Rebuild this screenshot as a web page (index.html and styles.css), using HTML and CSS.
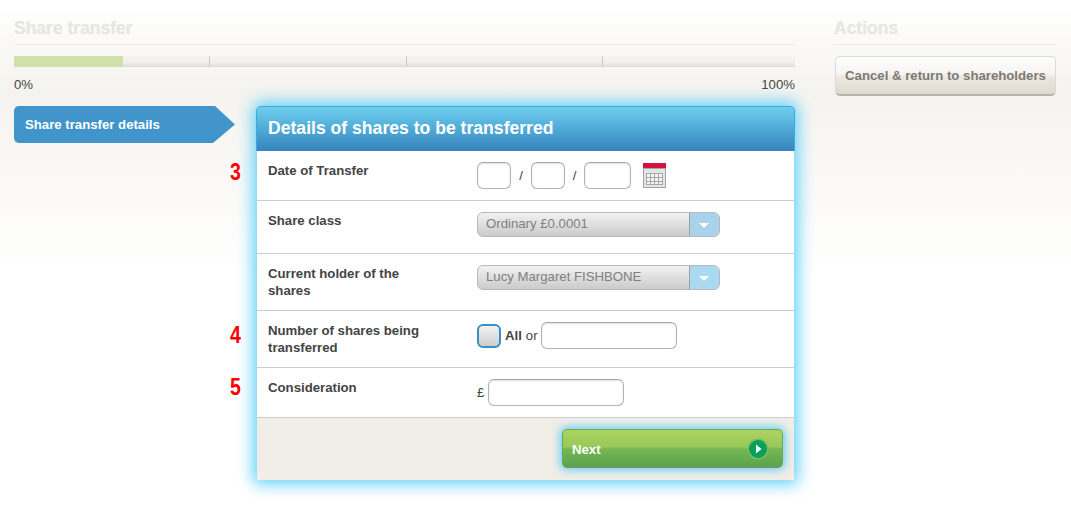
FILE: index.html
```html
<!DOCTYPE html>
<html lang="en">
<head>
    <meta charset="UTF-8">
    <title>Share transfer</title>
    <link rel="stylesheet" href="styles.css">
</head>
<body>
    <div class="page">
        <div class="main">
            <h2 class="section-title">Share transfer</h2>
            <div class="progress">
                <div class="progress-fill"></div>
                <span class="tick tick-1"></span>
                <span class="tick tick-2"></span>
                <span class="tick tick-3"></span>
            </div>
            <div class="progress-labels">
                <span>0%</span>
                <span>100%</span>
            </div>

            <div class="wizard">
                <div class="step">Share transfer details</div>

                <div class="panel">
                    <div class="panel-header">Details of shares to be transferred</div>

                    <div class="row row-date">
                        <span class="note note-date">3</span>
                        <label>Date of Transfer</label>
                        <div class="field">
                            <input type="text" class="input input-day">
                            <span class="slash">/</span>
                            <input type="text" class="input input-day">
                            <span class="slash slash-short">/</span>
                            <input type="text" class="input input-year">
                            <svg class="calendar" width="24" height="25" viewBox="0 0 24 25">
                                <rect x="0" y="0" width="23" height="25" fill="#e4e4e4"/>
                                <rect x="0" y="0" width="23" height="6" fill="#d3123f"/>
                                <rect x="0" y="5" width="23" height="1" fill="#8e1230"/>
                                <rect x="3.5" y="10.5" width="16" height="11" fill="#f4f4f4" stroke="#a8a8a8"/>
                                <path d="M7.5 10.5v11M11.5 10.5v11M15.5 10.5v11M3.5 14.5h16M3.5 18.5h16" stroke="#a8a8a8" fill="none"/>
                                <rect x="0.5" y="5.5" width="22" height="19" fill="none" stroke="#a3a3a3"/>
                            </svg>
                        </div>
                    </div>

                    <div class="row row-class">
                        <label>Share class</label>
                        <div class="field">
                            <div class="select">
                                <span class="select-text">Ordinary £0.0001</span>
                                <span class="select-arrow"></span>
                            </div>
                        </div>
                    </div>

                    <div class="row row-holder">
                        <label>Current holder of the shares</label>
                        <div class="field">
                            <div class="select">
                                <span class="select-text">Lucy Margaret FISHBONE</span>
                                <span class="select-arrow"></span>
                            </div>
                        </div>
                    </div>

                    <div class="row row-number">
                        <span class="note note-number">4</span>
                        <label>Number of shares being transferred</label>
                        <div class="field">
                            <span class="checkbox"></span>
                            <strong class="all">All</strong>
                            <span class="or">or</span>
                            <input type="text" class="input input-wide">
                        </div>
                    </div>

                    <div class="row row-consideration">
                        <span class="note note-consideration">5</span>
                        <label>Consideration</label>
                        <div class="field">
                            <span class="pound">£</span>
                            <input type="text" class="input input-wide">
                        </div>
                    </div>

                    <div class="panel-footer">
                        <button class="next">
                            <span>Next</span>
                            <svg width="22" height="22" viewBox="0 0 22 22">
                                <circle cx="11" cy="11" r="10.5" fill="#7fbb5e"/>
                                <circle cx="11" cy="11" r="9" fill="#05a05a"/>
                                <path d="M9 6.5l5.5 4.5-5.5 4.5z" fill="#fff"/>
                            </svg>
                        </button>
                    </div>
                </div>
            </div>
        </div>

        <div class="side">
            <h2 class="section-title">Actions</h2>
            <button class="cancel">Cancel &amp; return to shareholders</button>
        </div>
    </div>
</body>
</html>
```

FILE: styles.css
```css
* {
    box-sizing: border-box;
    margin: 0;
    padding: 0;
}

html, body {
    height: 526px;
    overflow: hidden;
}

body {
    font-family: "Liberation Sans", Arial, sans-serif;
    font-size: 13.2px;
    color: #444;
    background: linear-gradient(to bottom, #fff 5px, #f5f3ef 90px, #fff 275px);
}

.page {
    display: flex;
    padding: 0 15px 0 14px;
    gap: 39px;
}

.main {
    width: 781px;
}

.side {
    width: 222px;
}

.section-title {
    height: 45px;
    padding-top: 18px;
    font-size: 17.5px;
    line-height: 21px;
    color: #e7e6e4;
    text-shadow: 0 0 1px #eeedeb;
    border-bottom: 1px solid #ecebe8;
}

.progress {
    position: relative;
    height: 11px;
    margin-top: 11px;
    background: linear-gradient(to bottom, #f6f5f3, #f1efed 60%, #dedcda);
}

.progress-fill {
    width: 109px;
    height: 11px;
    background: #cfe0ab;
}

.tick {
    position: absolute;
    top: 0;
    width: 1px;
    height: 11px;
    background: #c9c8c6;
}

.tick-1 { left: 195px; }
.tick-2 { left: 392px; }
.tick-3 { left: 588px; }

.progress-labels {
    display: flex;
    justify-content: space-between;
    margin-top: 11px;
    line-height: 14px;
}

.wizard {
    display: flex;
    margin-top: 14px;
}

.step {
    width: 221px;
    height: 37px;
    padding-left: 11px;
    font-weight: bold;
    line-height: 37px;
    color: #fff;
    background: #4195cb;
    border-radius: 5px 0 0 5px;
    clip-path: polygon(0 0, 201px 0, 100% 50%, 199px 100%, 0 100%);
}

.panel {
    width: 537px;
    height: 374px;
    margin-left: 22px;
    background: #fff;
    border-radius: 5px 5px 2px 2px;
    box-shadow: 0 0 16px 4px #5fd0f8;
}

.panel-header {
    height: 45px;
    margin: 0 -1px;
    padding-left: 11px;
    font-size: 17.6px;
    font-weight: bold;
    line-height: 43px;
    color: #fff;
    background: linear-gradient(to bottom, #6dcfef, #3484bd);
    border: 1px solid #3fa9dc;
    border-bottom: 0;
    border-radius: 5px 5px 0 0;
}

.row {
    position: relative;
    display: flex;
    padding: 11px 11px 0;
    border-bottom: 1px solid #cdcdcd;
}

.row label {
    width: 209px;
    padding-right: 40px;
    font-weight: bold;
    line-height: 17px;
    color: #444;
}

.row-date { height: 50px; }
.row-class { height: 53px; }
.row-holder { height: 57px; }
.row-number { height: 57px; }
.row-consideration { height: 50px; }

.note {
    position: absolute;
    left: -28px;
    font-size: 23px;
    font-weight: bold;
    line-height: 24px;
    color: #f00;
    transform: scaleX(0.85);
}

.note-date { top: 9px; }
.note-number { top: 12px; }
.note-consideration { top: 7px; }

.field {
    display: flex;
    align-items: center;
    height: 27px;
}

.input {
    height: 27px;
    background: #fff;
    border: 1px solid #b3b3b3;
    border-top-color: #a5a5a5;
    border-radius: 6px;
    box-shadow: inset 0 1px 2px rgba(0, 0, 0, 0.12);
}

.input-day { width: 34px; }
.input-year { width: 47px; }
.input-wide { width: 136px; }

.slash {
    width: 20px;
    text-align: center;
}

.slash-short {
    width: 19px;
}

.calendar {
    margin-left: 12px;
    margin-top: -1px;
}

.select {
    display: flex;
    align-self: flex-start;
    width: 243px;
    height: 25px;
    overflow: hidden;
    border: 1px solid #b9b9b9;
    border-radius: 6px;
    background: linear-gradient(to bottom, #f2f2f2, #cbcbcb);
}

.select-text {
    flex: 1;
    padding-left: 8px;
    line-height: 22px;
    color: #808080;
}

.select-arrow {
    position: relative;
    width: 30px;
    background: #a8d3ea;
    border-left: 1px solid #a0a0a0;
}

.select-arrow::after {
    content: "";
    position: absolute;
    left: 9px;
    top: 10px;
    border: 5px solid transparent;
    border-top-color: #fff;
    border-bottom-width: 0;
}

.row-holder .select-arrow {
    background: #aadaf1;
}

.checkbox {
    width: 24px;
    height: 24px;
    background: linear-gradient(to bottom, #f3f3f3, #cdcdcd);
    border: 2px solid #3c8fc6;
    border-radius: 6px;
}

.all {
    margin-left: 4px;
}

.or {
    margin: 0 3px 0 4px;
}

.pound {
    width: 11px;
}

.panel-footer {
    display: flex;
    justify-content: flex-end;
    height: 62px;
    padding: 11px 11px 0 0;
    background: #f1ede7;
    border-radius: 0 0 4px 4px;
}

.next {
    display: flex;
    align-items: center;
    justify-content: space-between;
    width: 221px;
    height: 39px;
    padding: 1px 13px 0 9px;
    font-family: inherit;
    font-size: 13.2px;
    font-weight: bold;
    color: #fff;
    background: linear-gradient(to bottom, #add360 0, #98c95a 45%, #76b552 52%, #5aa44e 100%);
    border: 1px solid #6aa852;
    border-bottom-color: #7c8f74;
    border-radius: 5px;
    box-shadow: 0 0 8px 2px #62d0f7;
}

.cancel {
    display: block;
    width: 221px;
    height: 40px;
    margin: 11px 0 0 1px;
    font-family: inherit;
    font-size: 13.2px;
    font-weight: bold;
    color: #7d7a76;
    background: linear-gradient(to bottom, #fdfdfc 0, #f6f5f2 45%, #ebe7e0 55%, #dfd9cf 100%);
    border: 1px solid #dcdad6;
    border-bottom: 2px solid #b5b3b0;
    border-radius: 5px;
}
```
